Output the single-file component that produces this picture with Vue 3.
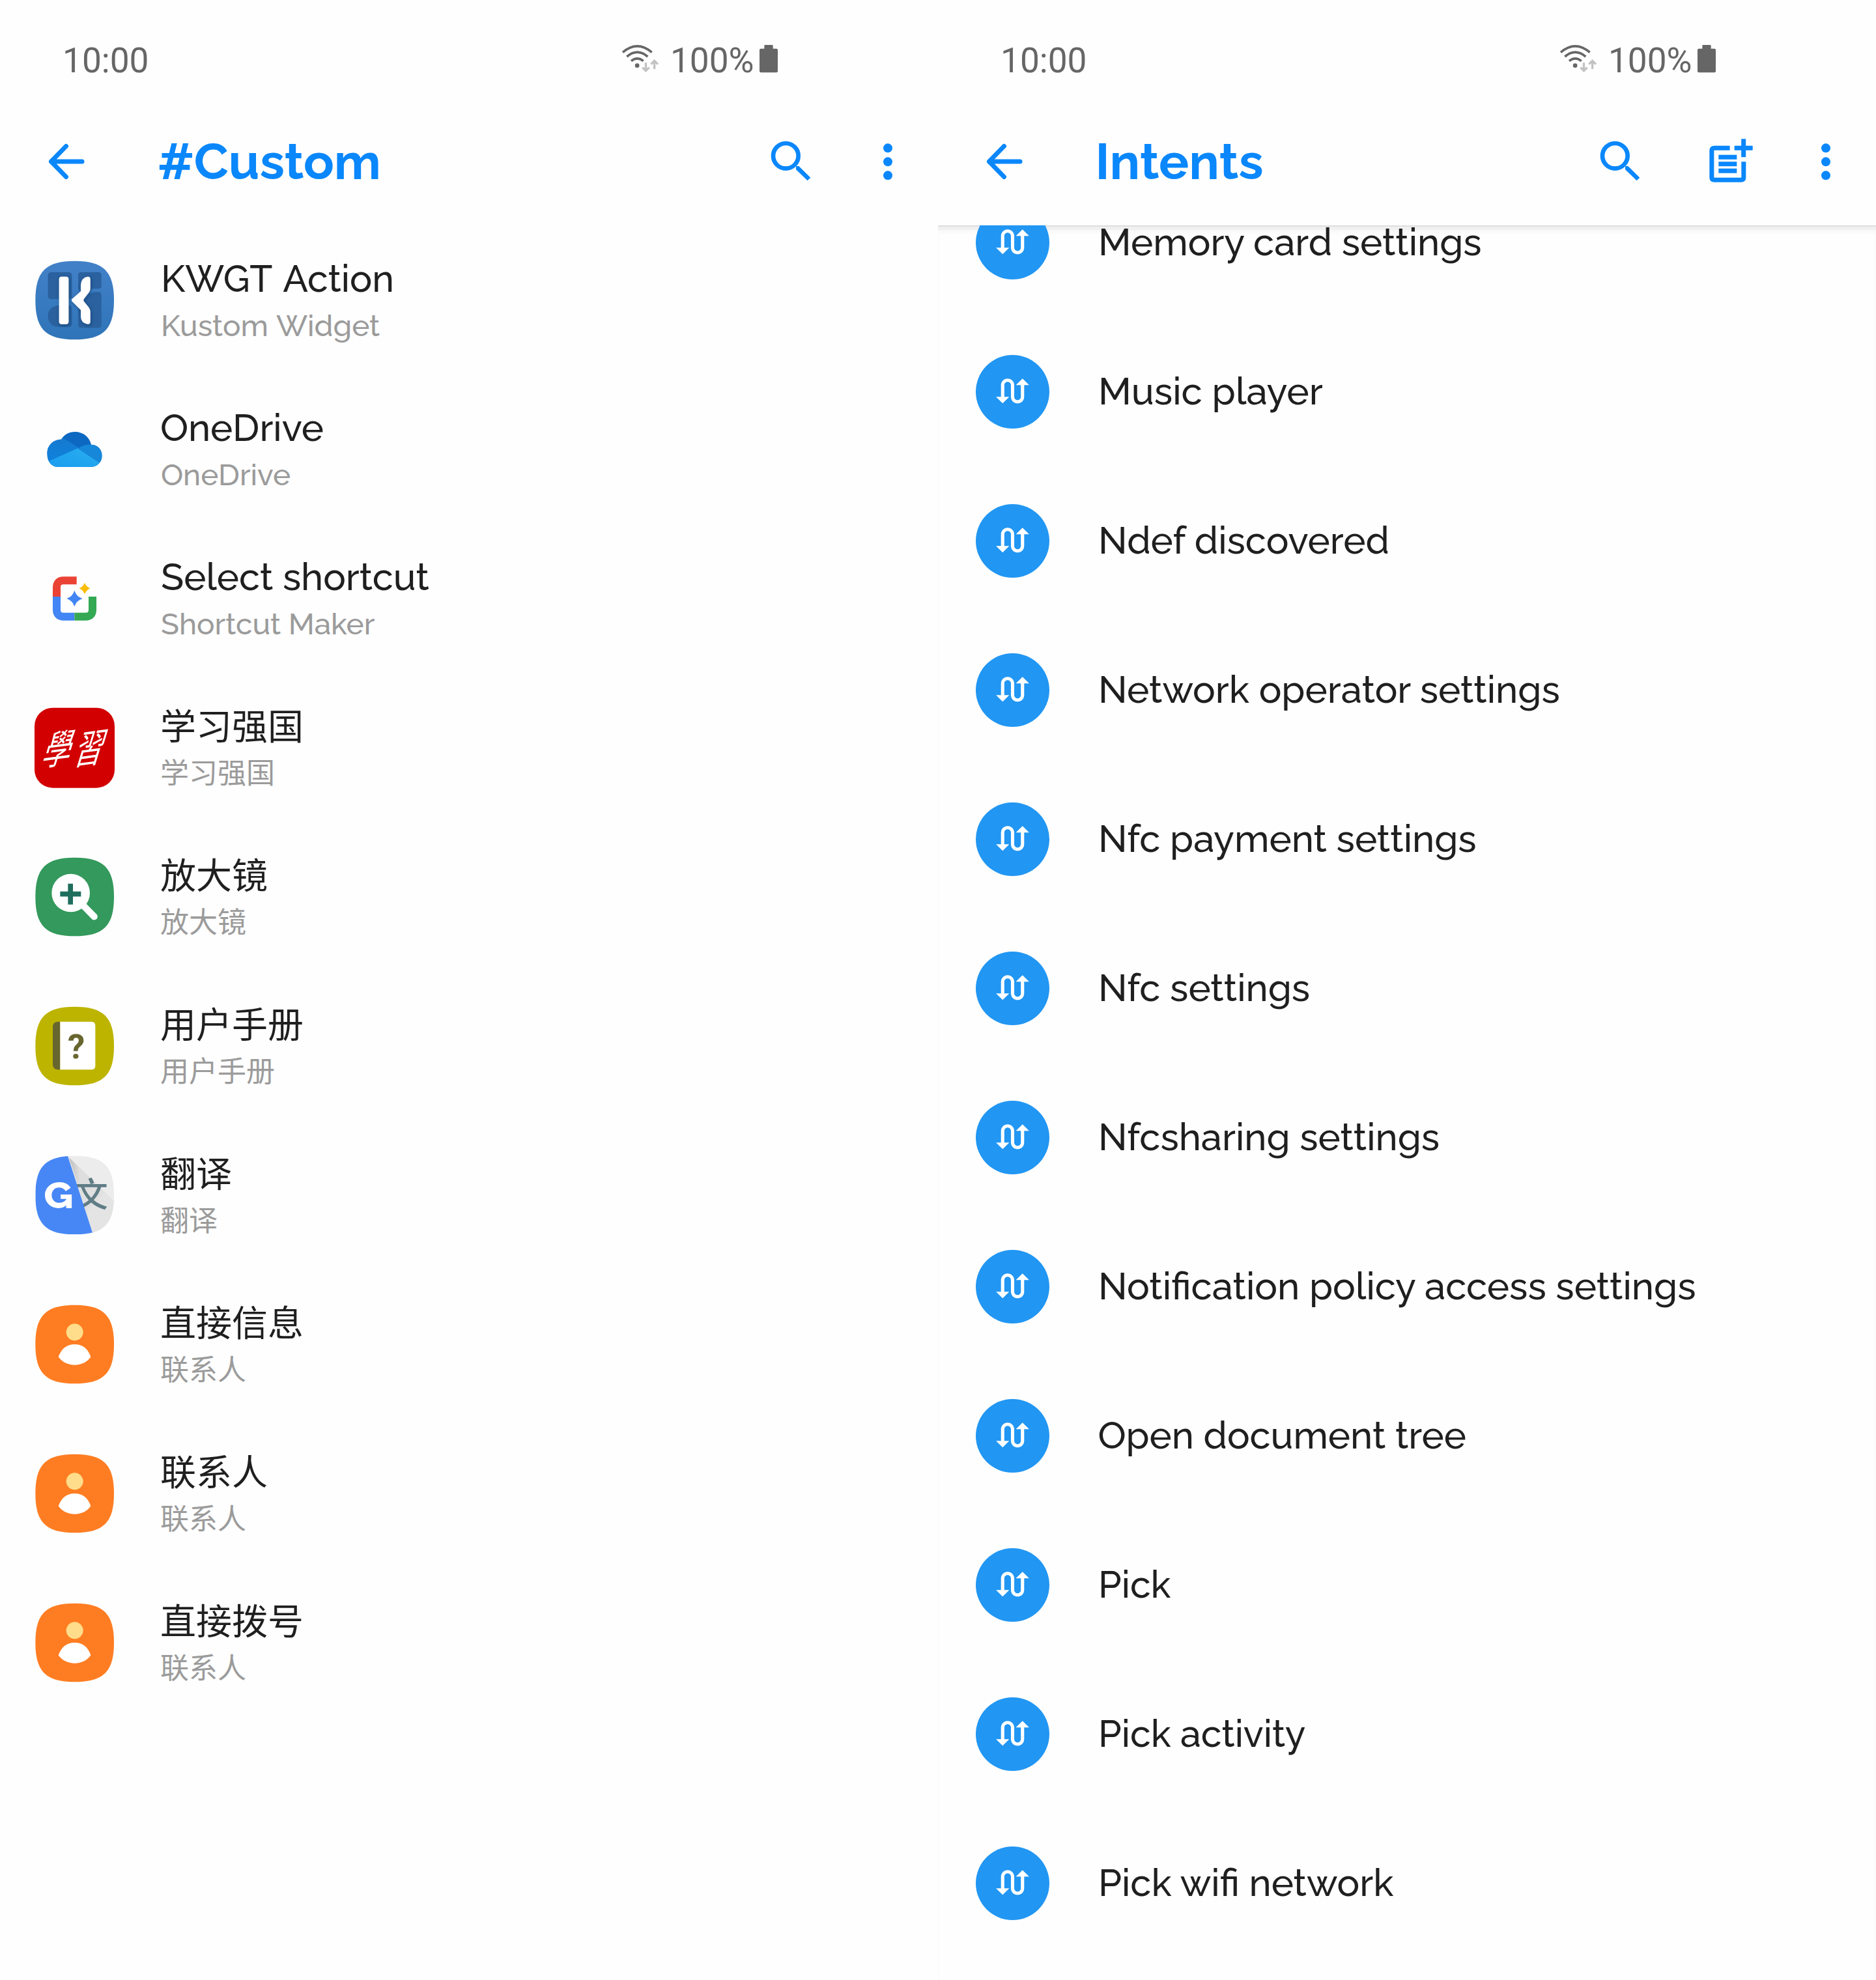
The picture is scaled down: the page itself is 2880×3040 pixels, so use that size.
<script setup>
// Stretches a label so its visible ink covers [left, width] relative to its own box.
const pen = document.createElement('canvas').getContext('2d')
const applyFit = (el, { value }) => {
  if (!value) return
  const [left, width] = value
  const cs = getComputedStyle(el)
  pen.font = `${cs.fontWeight} ${cs.fontSize} ${cs.fontFamily}`
  pen.wordSpacing = cs.wordSpacing
  const m = pen.measureText(el.textContent.trim())
  const scale = width / (m.actualBoundingBoxRight + m.actualBoundingBoxLeft)
  el.style.transform = `translateX(${left + m.actualBoundingBoxLeft * scale}px) scaleX(${scale})`
}
const vFit = { mounted: applyFit }

const squircle = 'M43 225C43 92 91 44 224 44S405 92 405 225S357 406 224 406S43 358 43 225Z'

const shortcuts = [
  { icon: 'kwgt', title: 'KWGT Action', sub: 'Kustom Widget', fit: [5, 354.5], subFit: [4, 335] },
  { icon: 'onedrive', title: 'OneDrive', sub: 'OneDrive', fit: [2, 248], subFit: [2, 197.5] },
  { icon: 'maker', title: 'Select shortcut', sub: 'Shortcut Maker', fit: [2, 410.5], subFit: [2, 327] },
  { icon: 'study', title: '学习强国', sub: '学习强国' },
  { icon: 'magnifier', title: '放大镜', sub: '放大镜' },
  { icon: 'manual', title: '用户手册', sub: '用户手册' },
  { icon: 'translate', title: '翻译', sub: '翻译' },
  { icon: 'contact', title: '直接信息', sub: '联系人' },
  { icon: 'contact', title: '联系人', sub: '联系人' },
  { icon: 'contact', title: '直接拨号', sub: '联系人' },
]

const intents = [
  { title: 'Memory card settings', fit: [4, 585] },
  { title: 'Music player', fit: [4, 340] },
  { title: 'Ndef discovered', fit: [4, 442] },
  { title: 'Network operator settings', fit: [4, 705] },
  { title: 'Nfc payment settings', fit: [4, 575.5] },
  { title: 'Nfc settings', fit: [4, 320] },
  { title: 'Nfcsharing settings', fit: [4, 519] },
  { title: 'Notification policy access settings', fit: [4, 914] },
  { title: 'Open document tree', fit: [1.5, 562.5] },
  { title: 'Pick', fit: [4, 107.5] },
  { title: 'Pick activity', fit: [4, 314] },
  { title: 'Pick wifi network', fit: [4, 451] },
]

const screens = [
  { name: '#Custom', fit: [-2, 337], kind: 'custom' },
  { name: 'Intents', fit: [0.5, 251.5], kind: 'intents' },
]
</script>

<template>
  <main class="board">
    <section v-for="s in screens" :key="s.kind" class="screen" :class="s.kind">
      <header class="top">
        <div class="status">
          <span class="clock" v-fit="[0, 125.7]">10:00</span>
          <svg class="wifi" viewBox="45 85 175 130">
            <g fill="none" stroke="#666" stroke-width="11">
              <path d="M51 122Q118 65 185 122" />
              <path d="M70 142Q118 101 166 142" />
              <path d="M90 162Q118 139 146 162" />
            </g>
            <circle cx="117.500" cy="183" r="10" fill="#666" />
            <g fill="none" stroke="#c2c2c2" stroke-width="10">
              <path d="M157.500 170V207M142 192L157.500 207L173 192" />
              <path d="M197 199V162M181 177L197 161L213 177" />
            </g>
          </svg>
          <span class="percent" v-fit="[0, 122.7]">100%</span>
          <svg class="battery" viewBox="678 88 84 127">
            <path fill="#666" d="M700 105V92Q700 88 704 88H736Q740 88 740 92V105H756Q762 105 762 111V209Q762 215 756 215H684Q678 215 678 209V111Q678 105 684 105Z" />
          </svg>
        </div>
        <div class="bar">
          <svg class="back" viewBox="0 0 60 60">
            <path d="M55 30H7.500M30.500 6.400L7.500 30L30.500 53.600" fill="none" stroke="#0a87fb" stroke-width="7" stroke-linecap="round" stroke-linejoin="round" />
          </svg>
          <h1 class="heading" v-fit="s.fit">{{ s.name }}</h1>
          <svg class="act search" viewBox="225 524 190 200">
            <circle cx="298" cy="597" r="58" fill="none" stroke="#0a87fb" stroke-width="20" />
            <path fill="#0a87fb" d="M345 656V646L348 644H358L412 697L398 711L345 660Z" />
          </svg>
          <svg v-if="s.kind === 'intents'" class="act post" viewBox="730 524 207 200">
            <g fill="none" stroke="#0a87fb" stroke-width="21">
              <path d="M828 561H757Q744.500 561 744.500 573V696Q744.500 708 757 708H879Q891.500 708 891.500 696V624" />
              <path d="M776 602.500H860M776 634.500H860M776 666H860M849 561H933M891 519V603" />
            </g>
          </svg>
          <svg class="act more" viewBox="1245 524 48 200">
            <g fill="#0a87fb"><circle cx="1269" cy="561" r="21" /><circle cx="1269" cy="624" r="21" /><circle cx="1269" cy="687" r="21" /></g>
          </svg>
        </div>
      </header>

      <ul v-if="s.kind === 'custom'" class="list">
        <li v-for="(it, i) in shortcuts" :key="i" class="row">
          <svg class="app" viewBox="0 0 450 450">
            <g v-if="it.icon === 'kwgt'">
              <defs>
                <linearGradient id="kw" x1="0" y1="0" x2="0" y2="1"><stop offset="0" stop-color="#4281c8" /><stop offset="1" stop-color="#2f74b8" /></linearGradient>
                <filter id="kws" x="-30%" y="-20%" width="160%" height="150%"><feDropShadow dx="3" dy="5" stdDeviation="8" flood-color="#0d3566" flood-opacity=".65" /></filter>
              </defs>
              <path :d="squircle" fill="url(#kw)" />
              <g transform="translate(0 14)">
                <g fill="#2a619e">
                  <rect x="101" y="82" width="110" height="124" rx="14" />
                  <path d="M254 82H333Q347 82 347 96V146Q347 158 333 158H305L270 190L240 160V96Q240 82 254 82Z" />
                  <path d="M150 235H196Q211 235 211 250V320Q211 334 196 334H150Q101 330 101 284Q101 240 150 235Z" />
                  <path d="M318 173H333Q347 173 347 187V324Q347 338 333 338H254Q240 338 240 324V245L290 180Z" />
                </g>
                <g fill="#fff" filter="url(#kws)">
                  <rect x="152" y="102" width="44" height="219" rx="12" />
                  <path d="M284 102Q296 102 296 114V158Q296 166 290 174L266 205Q262 211 267 217L289 244Q296 254 296 262V310Q296 321 284 321Q252 316 252 285V256L212 216Q207 211 212 205L252 170V142Q254 106 284 102Z" />
                </g>
              </g>
            </g>
            <g v-else-if="it.icon === 'onedrive'" transform="translate(0 -673)">
              <defs>
                <clipPath id="cl"><path d="M145 979C117 979 97 952 97 917C97 880 125 852 162 852C175 830 198 817 225 817C262 817 292 840 300 876C328 876 350 898 350 926C350 956 328 979 300 979Z" /></clipPath>
                <linearGradient id="od" x1="0" y1="1" x2="1" y2="0"><stop offset="0" stop-color="#1a9cf0" /><stop offset="1" stop-color="#29aeee" /></linearGradient>
                <linearGradient id="ol" x1="0" y1="0" x2="0" y2="1"><stop offset="0" stop-color="#1679cf" /><stop offset="1" stop-color="#0c84e0" /></linearGradient>
              </defs>
              <g clip-path="url(#cl)">
                <rect x="90" y="810" width="270" height="175" fill="#0c68c0" />
                <path d="M90 845H162Q185 850 245 893L112 965L90 985Z" fill="url(#ol)" />
                <path d="M240 893Q270 872 305 876L360 880V975L335 957Z" fill="#1787da" />
                <path d="M90 962L112 949L238 893L335 957L350 985H90Z" fill="url(#od)" />
              </g>
            </g>
            <g v-else-if="it.icon === 'maker'" transform="translate(0 80)">
              <g fill="none" stroke-width="36">
                <path stroke="#ea4335" d="M233 62H173Q141 62 141 94V136" />
                <path stroke="#4285f4" d="M141 136V196Q141 228 173 228H223" />
                <path stroke="#34a853" d="M223 228H274Q306 228 306 196V136" />
              </g>
              <path fill="#4285f4" d="M223 108Q232 136 260 145Q232 154 223 182Q214 154 187 145Q214 136 223 108Z" />
              <path fill="#fbbc05" d="M270 72Q277 91 296 98Q277 106 270 125Q263 106 244 98Q263 91 270 72Z" />
            </g>
            <g v-else-if="it.icon === 'study'">
              <rect x="39" y="41" width="369" height="369" rx="84" fill="#d20000" />
              <g fill="#fff" class="brush">
                <text transform="translate(66 308) skewX(-24) rotate(-8) scale(.66 1)" x="0" y="0">學</text>
                <text transform="translate(214 304) skewX(-24) rotate(-8) scale(.66 1)" x="0" y="0">習</text>
              </g>
            </g>
            <g v-else-if="it.icon === 'magnifier'">
              <path :d="squircle" fill="#33995c" />
              <g transform="translate(-30 -4)">
                <circle cx="236" cy="211" r="88" fill="#fff" />
                <path d="M285 260L344 320" stroke="#fff" stroke-width="31" stroke-linecap="round" />
                <path d="M187 216H283M234.500 168V264" stroke="#1f6e5e" stroke-width="23" />
              </g>
            </g>
            <g v-else-if="it.icon === 'manual'">
              <path :d="squircle" fill="#bdb400" />
              <g transform="translate(-30 -691)">
                <path d="M187 804H175Q153 806 153 828V1001Q153 1023 175 1025H187Z" fill="#68662f" />
                <path d="M187 804H331Q349 804 349 822V1007Q349 1025 331 1025H187Z" fill="#fff" />
                <text class="mark" x="261" y="972" text-anchor="middle" fill="#68662f">?</text>
              </g>
            </g>
            <g v-else-if="it.icon === 'translate'">
              <defs>
                <clipPath id="tr"><path :d="squircle" /></clipPath>
                <linearGradient id="fold" x1="0" y1="0" x2="1" y2="0"><stop offset="0" stop-color="#bdbdbd" /><stop offset=".5" stop-color="#dedede" /></linearGradient>
              </defs>
              <g clip-path="url(#tr)">
                <g transform="translate(-30 -28)">
                  <rect x="70" y="70" width="370" height="370" fill="#ececed" />
                  <path d="M228 80L440 285V440H340Z" fill="#e0e0e1" />
                  <path d="M228 80L325 172L320 215L272 215Z" fill="url(#fold)" />
                  <path d="M392 240L440 285V440H340L310 330Z" fill="#e4e4e5" />
                  <text class="han" x="251" y="308" fill="#607d85">文</text>
                  <path d="M60 60H218L342 445H60Z" fill="#4787f5" />
                  <text class="gee" x="112" y="312" textLength="136" lengthAdjust="spacingAndGlyphs" fill="#fff">G</text>
                </g>
              </g>
            </g>
            <g v-else>
              <path :d="squircle" fill="#ff7d22" />
              <g transform="translate(-30 -715)">
                <circle cx="254" cy="884" r="39" fill="#ffdd8a" />
                <path d="M179 998Q200 940 254 940Q308 940 328 998Q302 1035 254 1035Q206 1035 179 998Z" fill="#fff" />
              </g>
            </g>
          </svg>
          <div class="words" :class="[{ cjk: !it.fit }, it.icon]">
            <span class="title" v-fit="it.fit">{{ it.title }}</span>
            <span class="sub" v-fit="it.subFit">{{ it.sub }}</span>
          </div>
        </li>
      </ul>

      <div v-else class="viewport">
        <ul class="list scrolled">
          <li v-for="it in intents" :key="it.title" class="row">
            <span class="disc">
              <svg viewBox="0 0 24 24"><path fill="#fff" d="M18 4l-4 4h3v7c0 1.100-.9 2-2 2s-2-.9-2-2V8c0-2.210-1.790-4-4-4S5 5.790 5 8v7H2l4 4 4-4H7V8c0-1.100.9-2 2-2s2 .9 2 2v7c0 2.210 1.790 4 4 4s4-1.790 4-4V8h3l-4-4z" /></svg>
            </span>
            <span class="title" v-fit="it.fit">{{ it.title }}</span>
          </li>
        </ul>
      </div>
    </section>
  </main>
</template>

<style>
body {
  margin: 0;
  background: #fefefe;
}
</style>

<style scoped>
.board {
  display: flex;
  width: 2880px;
  height: 3040px;
  overflow: hidden;
  background: #fefefe;
  font-family: Raleway, Lato, 'Noto Sans CJK SC', sans-serif;
}
.screen {
  width: 1440px;
  height: 3040px;
  display: flex;
  flex-direction: column;
}
.top {
  height: 346px;
  flex: none;
  box-sizing: border-box;
  padding-top: 61px;
}
.status {
  height: 62px;
  display: flex;
  align-items: flex-start;
  font-family: Roboto, sans-serif;
  font-size: 53px;
  line-height: 64px;
  color: #666;
}
.clock {
  width: 854px;
  margin-left: 100px;
}
.wifi {
  width: 58.3px;
  height: 43.3px;
  margin-top: 7.3px;
}
.percent {
  width: 132.700px;
  margin-left: 20.800px;
}
.battery {
  width: 28px;
  height: 42.400px;
  margin-top: 8.300px;
}
.clock,
.percent,
.heading,
.title,
.sub {
  white-space: nowrap;
  transform-origin: 0 50%;
}
.bar {
  height: 100px;
  margin-top: 75px;
  padding: 0 69px 0 71px;
  display: flex;
  align-items: center;
}
.back {
  width: 60px;
  height: 60px;
}
.heading {
  flex: 1;
  margin: 1px 0 0 115px;
  font-size: 76px;
  line-height: 100px;
  font-weight: 700;
  color: #0a87fb;
}
.act {
  height: 66.7px;
  flex: none;
  overflow: visible;
}
.search {
  width: 63.3px;
  margin-right: 109.400px;
}
.intents .search {
  margin-right: 105px;
}
.post {
  width: 69px;
  margin-right: 102.700px;
}
.more {
  width: 16px;
}
.list {
  list-style: none;
  margin: 0;
  padding: 0;
}
.row {
  height: 229px;
  display: flex;
  align-items: center;
}
.app {
  width: 150px;
  height: 150px;
  margin-left: 40px;
}
.words {
  align-self: flex-start;
  display: flex;
  flex-direction: column;
  margin-left: 56px;
  padding-top: 44px;
}
.title {
  font-size: 57.500px;
  font-weight: 500;
  line-height: 76px;
  color: #1f1f1f;
}
.sub {
  margin-top: 4.500px;
  font-size: 45px;
  font-weight: 500;
  line-height: 60px;
  color: #9b9b9b;
}
.kwgt .title {
  word-spacing: 5px;
}
.kwgt .sub {
  word-spacing: 2px;
}
.words.cjk {
  padding-top: 45px;
}
.cjk .title {
  font-size: 55px;
  font-weight: 400;
}
.cjk .sub {
  margin-top: 3.500px;
  font-size: 44px;
  font-weight: 400;
}
.viewport {
  flex: 1;
  overflow: hidden;
  box-shadow: inset 0 2px 0 #dedede, inset 0 7px 0 #f0f0f0, inset 0 11px 4px #f8f8f8;
}
.scrolled {
  margin-top: -88px;
}
.disc {
  width: 113px;
  height: 113px;
  margin-left: 58px;
  border-radius: 50%;
  background: #2196f3;
  display: flex;
  align-items: center;
  justify-content: center;
}
.disc svg {
  width: 61px;
  height: 61px;
}
.scrolled .title {
  margin: -2px 0 0 75px;
  line-height: 46px;
}
.brush text {
  font: 400 190px 'Noto Sans CJK TC', sans-serif;
}
.mark {
  font: 700 158px Roboto, sans-serif;
}
.han {
  font: 500 156px 'Noto Sans CJK SC', sans-serif;
}
.gee {
  font: 800 170px Raleway, Lato, sans-serif;
}
</style>
